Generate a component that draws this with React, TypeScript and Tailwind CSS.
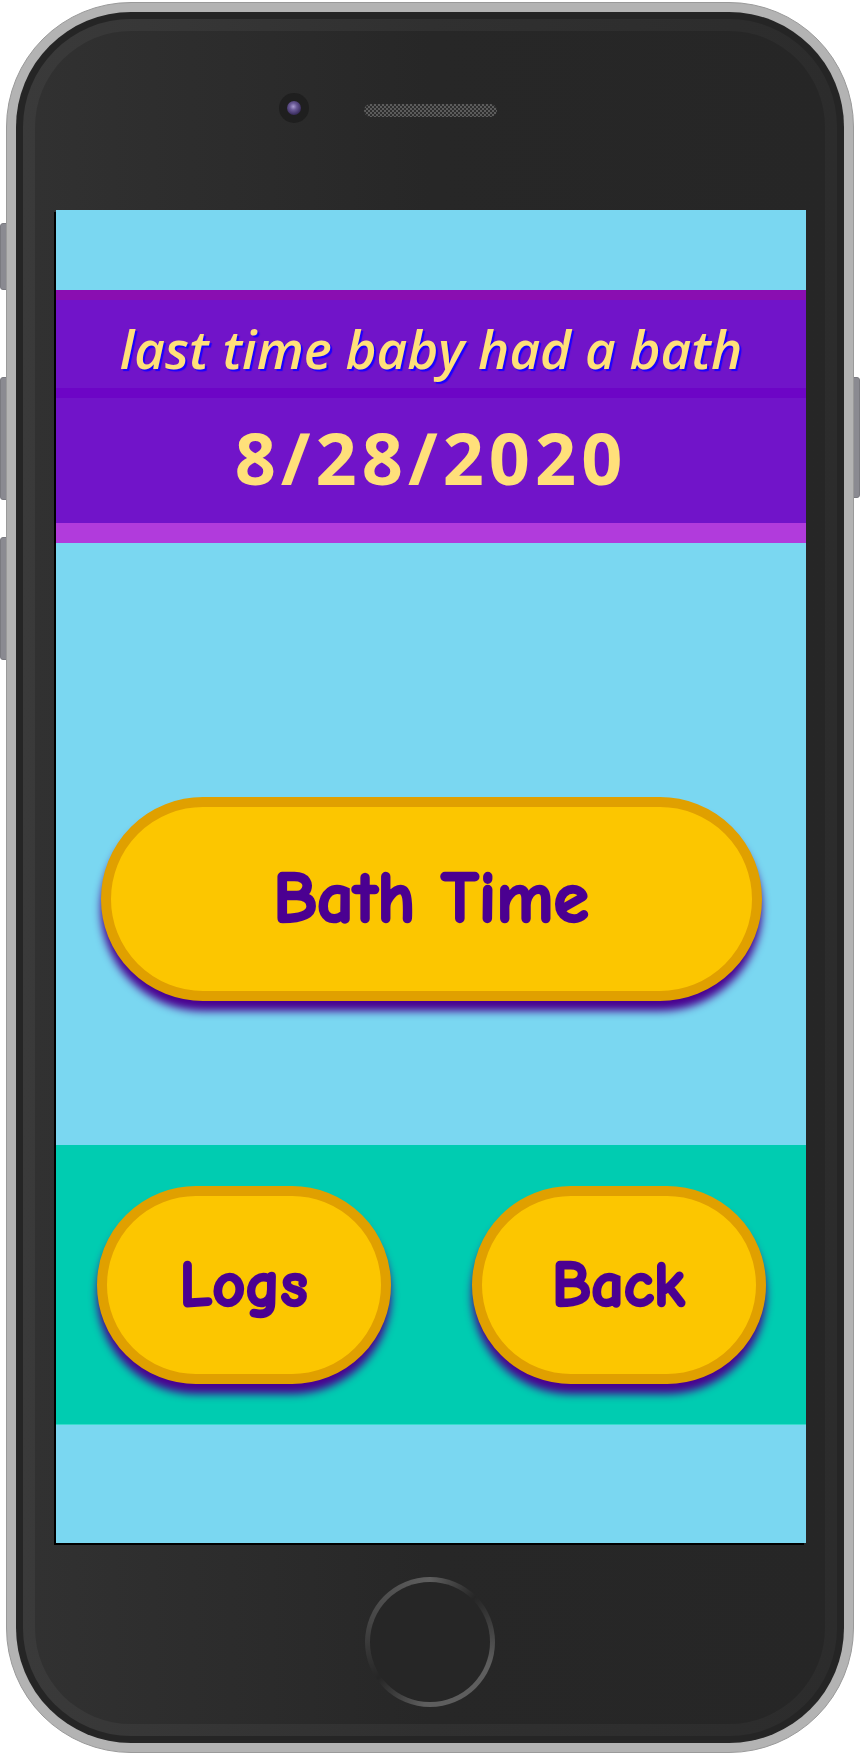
import React from 'react'

const sans = "font-['Open_Sans','Noto_Sans',sans-serif]"
const comic = "font-['Comic_Sans_MS','Comic_Neue','Lato',sans-serif]"

function PillButton({ label, big }: { label: string; big?: boolean }) {
  return (
    <button
      className={
        big
          ? `flex items-center justify-center w-[661px] h-[204px] rounded-full border-[10px] border-[#e0a000] bg-[#fcc600] shadow-[0_10px_8px_#4a0090] text-[#4b0091] text-[72px] font-bold [-webkit-text-stroke:2.5px_#4b0091] ${comic}`
          : `flex items-center justify-center w-[294px] h-[198px] rounded-full border-[10px] border-[#e0a000] bg-[#fcc600] shadow-[0_10px_8px_#4a0090] text-[#4b0091] text-[64px] font-bold [-webkit-text-stroke:2.5px_#4b0091] ${comic}`
      }
    >
      {label}
    </button>
  )
}

function Screen() {
  return (
    <div className="ml-[21px] w-[750px] h-[1333px] flex flex-col bg-[#7ad7f1] shadow-[-2px_2px_0_#000]">
      <div className="h-[80px]" />

      <div className="flex flex-col">
        <div className="h-[10px] bg-[#8a0eb1]" />
        <div
          className={`h-[88px] bg-[#7114c9] flex items-center justify-center pt-[9px] text-[53px] italic font-semibold text-[#ffe07a] [text-shadow:2px_2px_1px_#1a00ff] ${sans}`}
        >
          last time baby had a bath
        </div>
        <div className="h-[10px] bg-[#6d05c6]" />
        <div
          className={`h-[125px] bg-[#7114c9] flex items-center justify-center pb-[8px] text-[72px] font-bold tracking-[5px] text-[#ffe07a] ${sans}`}
        >
          8/28/2020
        </div>
        <div className="h-[20px] bg-[#b13bdc]" />
      </div>

      <div className="mt-[254px] flex justify-center">
        <PillButton label="Bath Time" big />
      </div>

      <div className="mt-[144px] h-[280px] grid grid-cols-2 items-center bg-[#00ccb1] border-b border-[#38dccd]">
        <div className="flex justify-center">
          <PillButton label="Logs" />
        </div>
        <div className="flex justify-center">
          <PillButton label="Back" />
        </div>
      </div>
    </div>
  )
}

export default function App() {
  return (
    <div className="relative w-[862px] h-[1754px] bg-white pt-[2px] pl-[6px]">
      {/* side buttons */}
      <div className="absolute left-0 top-[223px] w-[7px] h-[67px] rounded-l-[3px] bg-[#8a8a91] border border-[#7a7a80]" />
      <div className="absolute left-0 top-[377px] w-[7px] h-[123px] rounded-l-[3px] bg-[#8a8a91] border border-[#7a7a80]" />
      <div className="absolute left-0 top-[537px] w-[7px] h-[123px] rounded-l-[3px] bg-[#8a8a91] border border-[#7a7a80]" />
      <div className="absolute left-[853px] top-[377px] w-[7px] h-[121px] rounded-r-[3px] bg-[#8a8a91] border border-[#7a7a80]" />

      <div className="relative w-[848px] h-[1751px] rounded-[125px] bg-[#b3b3b3] border border-[#9a9a9a] p-[9px]">
        <div className="h-full rounded-[115px] bg-[#252525] p-[7px]">
          <div className="h-full rounded-[108px] bg-gradient-to-r from-[#3a3a3a] via-[#303030] to-[#2c2c2c] p-[12px]">
            <div className="h-full rounded-[96px] bg-gradient-to-r from-[#313131] via-[#272727] to-[#262626] flex flex-col">
              {/* camera + speaker */}
              <div className="h-[179px] flex items-start pt-[62px] pl-[244px]">
                <div className="w-[30px] h-[30px] rounded-full bg-[#1f1f1f] flex items-center justify-center">
                  <div className="w-[14px] h-[14px] rounded-full bg-[radial-gradient(circle_at_45%_40%,#a89ad0_0,#6a5a96_30%,#3a2d5e_70%,#2a2240_100%)]" />
                </div>
                <div className="ml-[55px] mt-[11px] w-[133px] h-[13px] rounded-full bg-[repeating-conic-gradient(#5c5c5c_0_25%,#2e2e2e_0_50%)] [background-size:4px_4px]" />
              </div>

              <Screen />

              {/* home button */}
              <div className="mt-[34px] mx-auto w-[130px] h-[130px] rounded-full p-[5px] bg-[conic-gradient(from_0deg,#5e5e5e,#262626_45deg,#5e5e5e_110deg,#5e5e5e_185deg,#262626_235deg,#464646_290deg,#5e5e5e)]">
                <div className="w-full h-full rounded-full bg-[#262626]" />
              </div>
            </div>
          </div>
        </div>
      </div>
    </div>
  )
}
